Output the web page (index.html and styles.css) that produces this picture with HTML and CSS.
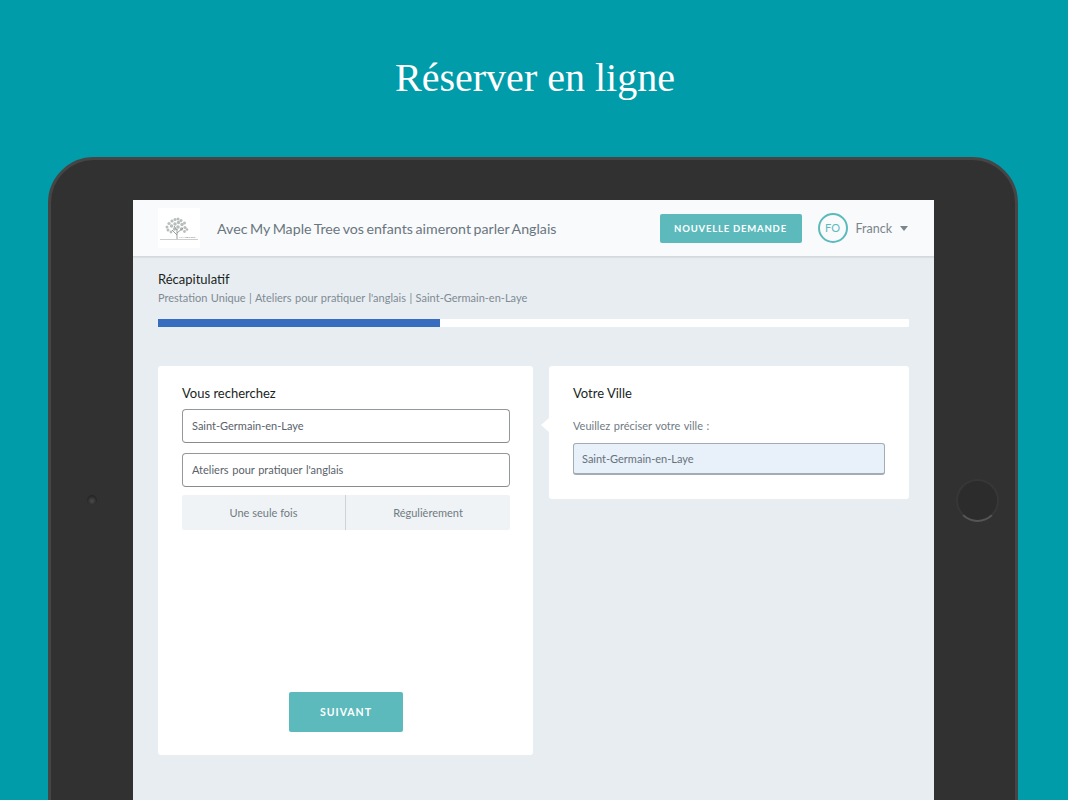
FILE: index.html
```html
<!DOCTYPE html>
<html lang="fr">
<head>
  <meta charset="UTF-8" />
  <title>Réserver en ligne</title>
  <link rel="stylesheet" href="styles.css">
</head>
<body>
  <h1 class="promo-title">Réserver en ligne</h1>

  <div class="tablet">
    <div class="bezel"><span class="camera"></span></div>

    <div class="screen">
      <!-- barre du haut -->
      <header class="topbar">
        <div class="logo">
          <svg width="42" height="40" viewBox="0 0 42 40">
            <g fill="#b9bdbd">
              <circle cx="9" cy="19" r="1.500" />
              <circle cx="11" cy="15.500" r="1.600" />
              <circle cx="10" cy="22" r="1.500" />
              <circle cx="13" cy="24" r="1.400" />
              <circle cx="14" cy="13" r="1.600" />
              <circle cx="13.500" cy="18" r="1.700" />
              <circle cx="17" cy="11.500" r="1.500" />
              <circle cx="17" cy="16" r="1.700" />
              <circle cx="16.500" cy="21" r="1.700" />
              <circle cx="20" cy="11" r="1.500" />
              <circle cx="20.500" cy="14.500" r="1.700" />
              <circle cx="20" cy="19" r="1.800" />
              <circle cx="23" cy="12.500" r="1.500" />
              <circle cx="24" cy="16.500" r="1.700" />
              <circle cx="23.500" cy="21" r="1.700" />
              <circle cx="26.500" cy="15" r="1.500" />
              <circle cx="27" cy="19.500" r="1.600" />
              <circle cx="26.500" cy="23.500" r="1.400" />
              <circle cx="29" cy="21.500" r="1.300" />
            </g>
            <path d="M19 31V21M19 27l-5-5M19 25l6-5M19 22l-3-4" stroke="#8e9292" stroke-width=".9" fill="none" />
            <path d="M2 31.500H40" stroke="#a9adad" stroke-width=".6" />
            <text x="21" y="30" class="logo-text">My Maple Tree</text>
          </svg>
        </div>
        <div class="topbar-title">Avec My Maple Tree vos enfants aimeront parler Anglais</div>
        <button class="btn btn-small">NOUVELLE DEMANDE</button>
        <div class="avatar">FO</div>
        <div class="user-name">Franck</div>
        <span class="caret"></span>
      </header>

      <main class="content">
        <section class="recap">
          <h2>Récapitulatif</h2>
          <p>Prestation Unique | Ateliers pour pratiquer l'anglais | Saint-Germain-en-Laye</p>
          <div class="progress"><div class="progress-fill" style="width: 37.5%"></div></div>
        </section>

        <div class="columns">
          <section class="card card-search">
            <h3>Vous recherchez</h3>
            <div class="field">Saint-Germain-en-Laye</div>
            <div class="field">Ateliers pour pratiquer l'anglais</div>
            <div class="toggle">
              <div class="toggle-item">Une seule fois</div>
              <div class="toggle-item">Régulièrement</div>
            </div>
            <button class="btn btn-next">SUIVANT</button>
          </section>

          <section class="card card-city">
            <h3>Votre Ville</h3>
            <label class="city-label">Veuillez préciser votre ville :</label>
            <div class="city-input">Saint-Germain-en-Laye</div>
          </section>
        </div>
      </main>
    </div>

    <div class="bezel bezel-right"><span class="home-btn"></span></div>
  </div>
</body>
</html>
```

FILE: styles.css
```css
* {
  box-sizing: border-box;
  margin: 0;
  padding: 0;
}
body {
  height: 800px;
  overflow: hidden;
  background: #009ca9;
  font-family: Lato, "Liberation Sans", sans-serif;
}

/* titre */
.promo-title {
  height: 157px;
  padding: 53px 0 0 2px;
  font-family: "Liberation Serif", serif;
  font-size: 40px;
  line-height: 50px;
  font-weight: normal;
  color: #fff;
  text-align: center;
}

/* tablette */
.tablet {
  display: grid;
  grid-template-columns: 82px 801px 81px;
  width: 970px;
  height: 686px;
  margin-left: 48px;
  padding-top: 40px;
  background: #323132;
  border: 3px solid #454546;
  border-radius: 46px;
}
.bezel {
  display: flex;
  align-items: center;
  justify-content: center;
  margin-top: -40px;
}
.bezel-right {
  padding-left: 6px;
}
.camera {
  width: 10px;
  height: 10px;
  border-radius: 50%;
  background: radial-gradient(circle at 50% 60%, #4c4c4c 0, #262626 65%);
}
.home-btn {
  width: 43px;
  height: 43px;
  border-radius: 50%;
  background: #2d2c2d;
  border: 2px solid #383738;
  border-bottom-color: #555;
}
.screen {
  background: #e8edf1;
}

/* barre du haut */
.topbar {
  display: flex;
  align-items: center;
  height: 57px;
  padding: 0 26px 0 25px;
  background: #f9fafb;
  border-bottom: 1px solid #d5d9db;
  box-shadow: 0 1px 1px rgba(0, 0, 0, 0.06);
}
.logo {
  width: 42px;
  height: 40px;
  margin-right: 17px;
  background: #fff;
}
.logo svg {
  display: block;
}
.logo-text {
  font-family: Lato, sans-serif;
  font-size: 2.500px;
  fill: #777;
}
.topbar-title {
  flex: 1;
  font-size: 14.200px;
  word-spacing: -1px;
  color: #69767f;
}
.btn {
  border: none;
  border-radius: 2px;
  background: #5cbabc;
  color: #fff;
  font-family: Lato, "Liberation Sans", sans-serif;
  font-weight: bold;
  text-align: center;
}
.btn-small {
  width: 142px;
  height: 29px;
  font-size: 9.500px;
  letter-spacing: 0.800px;
}
.avatar {
  width: 30px;
  height: 30px;
  margin-left: 16px;
  border: 2px solid #5cbabc;
  border-radius: 50%;
  font-size: 11px;
  line-height: 26px;
  text-align: center;
  color: #5cbabc;
}
.user-name {
  margin-left: 8px;
  font-size: 12.500px;
  color: #7a858c;
}
.caret {
  margin-left: 8px;
  border-left: 4.500px solid transparent;
  border-right: 4.500px solid transparent;
  border-top: 5px solid #7a858c;
}

.content {
  padding: 14px 25px 0;
}

/* récapitulatif */
.recap h2 {
  font-size: 13px;
  line-height: 16px;
  font-weight: normal;
  color: #1a1f23;
}
.recap p {
  margin-top: 4px;
  font-size: 11px;
  line-height: 14px;
  word-spacing: 0.660px;
  color: #7f8b93;
}
.progress {
  height: 8px;
  margin-top: 14px;
  background: #fff;
  border-radius: 1px;
}
.progress-fill {
  height: 100%;
  background: #376cbe;
}

/* colonnes */
.columns {
  display: flex;
  align-items: flex-start;
  gap: 16px;
  margin-top: 39px;
}
.card {
  position: relative;
  padding: 19px 23px 19px 24px;
  background: #fff;
  border-radius: 3px;
}
.card h3 {
  font-size: 13px;
  line-height: 17px;
  font-weight: normal;
  color: #1a1f23;
}
.card-search {
  display: flex;
  flex-direction: column;
  width: 375px;
  height: 389px;
}
.field {
  height: 34px;
  margin-bottom: 10px;
  padding-left: 9px;
  border: 1px solid #93989c;
  border-bottom-color: #868c90;
  border-radius: 4px;
  font-size: 11px;
  line-height: 32px;
  word-spacing: 0.800px;
  color: #59626a;
}
.card-search h3 + .field {
  margin-top: 7px;
}
.toggle {
  display: grid;
  grid-template-columns: 163px 1fr;
  height: 35px;
  margin-top: -2px;
  background: #f0f3f5;
  border-radius: 2px;
}
.toggle-item {
  font-size: 11px;
  line-height: 35px;
  text-align: center;
  color: #6f7b83;
}
.toggle-item + .toggle-item {
  border-left: 1px solid #ced3d6;
}
.btn-next {
  align-self: center;
  width: 114px;
  height: 40px;
  margin-top: auto;
  margin-bottom: 4px;
  font-size: 10.500px;
  letter-spacing: 1px;
}

/* carte ville */
.card-city {
  width: 360px;
  height: 133px;
  padding-right: 24px;
}
.card-city::before {
  content: "";
  position: absolute;
  left: -8px;
  top: 52px;
  border-top: 7px solid transparent;
  border-bottom: 7px solid transparent;
  border-right: 8px solid #fff;
}
.city-label {
  display: block;
  margin-top: 17px;
  font-size: 11px;
  line-height: 14px;
  word-spacing: 0.800px;
  color: #6f7b83;
}
.city-input {
  height: 32px;
  margin-top: 10px;
  padding-left: 8px;
  background: #e8f0f9;
  border: 1px solid #a3abb3;
  border-bottom-width: 2px;
  border-radius: 3px;
  font-size: 11px;
  line-height: 30px;
  color: #66727b;
}
```
